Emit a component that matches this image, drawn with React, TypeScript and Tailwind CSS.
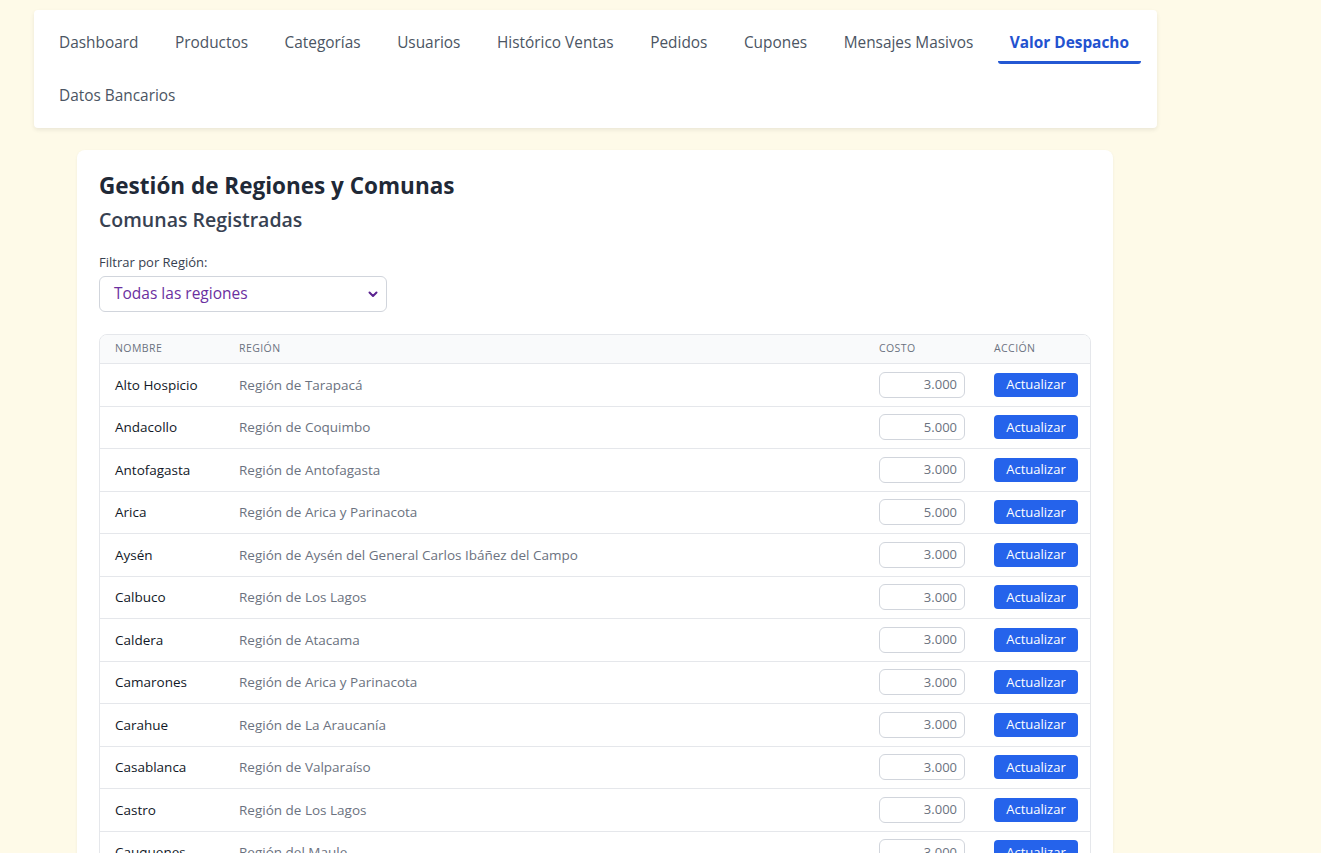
import React from "react";

const navItems = [
  "Dashboard",
  "Productos",
  "Categorías",
  "Usuarios",
  "Histórico Ventas",
  "Pedidos",
  "Cupones",
  "Mensajes Masivos",
  "Valor Despacho",
  "Datos Bancarios",
];

const rows: [string, string, string][] = [
  ["Alto Hospicio", "Región de Tarapacá", "3.000"],
  ["Andacollo", "Región de Coquimbo", "5.000"],
  ["Antofagasta", "Región de Antofagasta", "3.000"],
  ["Arica", "Región de Arica y Parinacota", "5.000"],
  ["Aysén", "Región de Aysén del General Carlos Ibáñez del Campo", "3.000"],
  ["Calbuco", "Región de Los Lagos", "3.000"],
  ["Caldera", "Región de Atacama", "3.000"],
  ["Camarones", "Región de Arica y Parinacota", "3.000"],
  ["Carahue", "Región de La Araucanía", "3.000"],
  ["Casablanca", "Región de Valparaíso", "3.000"],
  ["Castro", "Región de Los Lagos", "3.000"],
  ["Cauquenes", "Región del Maule", "3.000"],
  ["Cerrillos", "Región Metropolitana de Santiago", "3.000"],
];

const font = { fontFamily: '"Open Sans", "Liberation Sans", sans-serif' };

export default function App() {
  return (
    <div
      className="h-[853px] overflow-hidden bg-[#fefae8] pt-[10px] pl-[34px]"
      style={font}
    >
      <nav className="w-[1123px] bg-white shadow-[0_2px_4px_rgba(0,0,0,0.08)] rounded-sm pl-[13px] pr-3 pt-[10px] pb-[11px] flex flex-wrap gap-x-[12.5px] gap-y-[9px]">
        {navItems.map((item) => {
          const active = item === "Valor Despacho";
          return (
            <div
              key={item}
              className={
                active
                  ? "px-3 pt-[11px] pb-[6px] border-b-[3px] border-[#2458d3] rounded-b-[3px] text-[15.4px] leading-6 font-bold text-[#2352cf]"
                  : "px-3 pt-[11px] pb-[6px] border-b-[3px] border-transparent text-[15.4px] leading-6 text-[#4b5563]"
              }
            >
              {item}
            </div>
          );
        })}
      </nav>

      <div className="ml-[43px] mt-[22px] w-[1036px] bg-white rounded-lg shadow-[0_1px_3px_rgba(0,0,0,0.06)] p-[22px]">
        <h1 className="text-[22.5px] leading-7 font-bold text-[#1f2937]">
          Gestión de Regiones y Comunas
        </h1>
        <h2 className="mt-[7px] text-[19.5px] leading-[26px] font-semibold text-[#374151]">
          Comunas Registradas
        </h2>
        <div className="mt-[19px] text-[13px] leading-5 text-[#374151]">
          Filtrar por Región:
        </div>
        <div className="mt-1 w-[288px] h-9 border border-gray-300 rounded-md flex items-center justify-between pl-[14px] pr-[8px]">
          <span className="text-[15.5px] text-[#6b2fa0]">Todas las regiones</span>
          <svg width="10" height="7" viewBox="0 0 10 7" fill="none">
            <path
              d="M1.5 1.5 L5 5 L8.5 1.5"
              stroke="#5b2390"
              strokeWidth="2"
              strokeLinecap="round"
              strokeLinejoin="round"
            />
          </svg>
        </div>

        <div className="mt-[22px] border border-gray-200 rounded-lg overflow-hidden">
          <div className="grid grid-cols-[124px_640px_115px_1fr] h-[29px] items-center bg-gray-50 border-b border-gray-200 text-[10.5px] tracking-[0.04em] uppercase text-[#6b7280]">
            <div className="px-[15px]">Nombre</div>
            <div className="px-[15px]">Región</div>
            <div className="px-[15px]">Costo</div>
            <div className="px-[15px]">Acción</div>
          </div>
          {rows.map(([name, region, cost]) => (
            <div
              key={name}
              className="grid grid-cols-[124px_640px_115px_1fr] h-[42.5px] items-center border-b border-gray-200 text-[13.5px]"
            >
              <div className="px-[15px] text-[#111827]">{name}</div>
              <div className="px-[15px] text-[#6b7280]">{region}</div>
              <div className="px-[15px]">
                <div className="w-[86px] h-[26px] border border-gray-300 rounded-md flex items-center justify-end pr-[7px] text-[13px] text-[#6b7280]">
                  {cost}
                </div>
              </div>
              <div className="px-[15px]">
                <button className="w-[84px] h-6 bg-[#2563eb] text-white rounded-[4px] text-[13px] font-medium">
                  Actualizar
                </button>
              </div>
            </div>
          ))}
        </div>
      </div>
    </div>
  );
}
